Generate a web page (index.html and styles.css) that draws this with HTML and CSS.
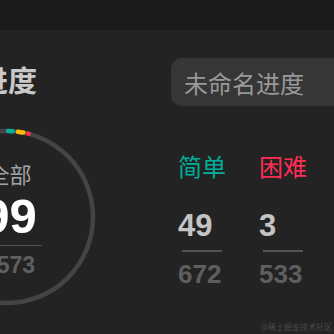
FILE: index.html
```html
<!DOCTYPE html>
<html lang="zh-CN">
<head>
    <meta charset="UTF-8">
    <meta name="viewport" content="width=device-width, initial-scale=1.0">
    <title>进度</title>
    <link rel="stylesheet" href="styles.css">
</head>
<body>
    <div class="topbar"></div>

    <div class="board">
        <section class="overview">
            <h2 class="title">进度</h2>
            <div class="ring-wrap">
                <svg class="ring" width="180" height="180" viewBox="0 0 180 180">
                    <circle class="ring-track" cx="90" cy="90" r="86"></circle>
                    <!-- segments start at 12 o'clock, later ones drawn on top -->
                    <circle class="ring-seg seg-easy" cx="90" cy="90" r="86" stroke-dasharray="5 600" stroke-dashoffset="-1"></circle>
                    <circle class="ring-seg seg-medium" cx="90" cy="90" r="86" stroke-dasharray="5.5 600" stroke-dashoffset="-11"></circle>
                    <circle class="ring-seg seg-hard" cx="90" cy="90" r="86" stroke-dasharray="0.5 600" stroke-dashoffset="-21.5"></circle>
                </svg>
                <div class="ring-text">
                    <div class="ring-label">全部</div>
                    <div class="ring-done">99</div>
                    <div class="ring-line"></div>
                    <div class="ring-total">1573</div>
                </div>
            </div>
        </section>

        <section class="detail">
            <input class="name-box" type="text" placeholder="未命名进度">
            <div class="stats">
                <div class="stat easy">
                    <div class="stat-label">简单</div>
                    <div class="stat-done">49</div>
                    <div class="stat-line"></div>
                    <div class="stat-total">672</div>
                </div>
                <div class="stat hard">
                    <div class="stat-label">困难</div>
                    <div class="stat-done">3</div>
                    <div class="stat-line"></div>
                    <div class="stat-total">533</div>
                </div>
            </div>
        </section>
    </div>

    <div class="watermark">@稀土掘金技术社区</div>
</body>
</html>
```

FILE: styles.css
```css
html, body {
    margin: 0;
    padding: 0;
    height: 100%;
    overflow: hidden;
    background-color: #232323;
    font-family: "Noto Sans CJK SC", sans-serif;
}

.topbar {
    height: 30px;
    background-color: #1b1b1b;
}

.board {
    display: flex;
    margin-left: -95px;
}

.overview {
    width: 205px;
    flex-shrink: 0;
}

.title {
    margin: 31px 0 0 0;
    padding-left: 74px;
    font-size: 29px;
    line-height: 36px;
    font-weight: 700;
    color: #c9c9c9;
}

.ring-wrap {
    position: relative;
    width: 180px;
    height: 180px;
    margin: 30px 0 0 12px;
}

.ring {
    display: block;
    transform: rotate(-90deg);
}

.ring-track,
.ring-seg {
    fill: none;
    stroke-width: 4.5;
}

.ring-track {
    stroke: #444444;
}

.ring-seg {
    stroke-linecap: round;
}

.seg-easy {
    stroke: #00af9b;
}

.seg-medium {
    stroke: #ffb800;
}

.seg-hard {
    stroke: #ff2d55;
}

.ring-text {
    position: absolute;
    top: 0;
    left: 0;
    right: 0;
    bottom: 0;
    display: flex;
    flex-direction: column;
    align-items: center;
    padding: 32px 0 0 5px;
}

.ring-label {
    font-size: 22px;
    line-height: 1.3;
    color: #a3a3a3;
}

.ring-done {
    margin-top: 4px;
    font-family: "Liberation Sans", sans-serif;
    font-size: 49px;
    line-height: 1;
    font-weight: 700;
    color: #ffffff;
}

.ring-line {
    width: 64px;
    height: 1.5px;
    margin-top: 4px;
    background-color: #555555;
}

.ring-total {
    margin-top: 8px;
    font-family: "Liberation Sans", sans-serif;
    font-size: 23px;
    line-height: 1;
    font-weight: 700;
    color: #5f5f5f;
}

.detail {
    margin-left: 61px;
    padding-top: 28px;
}

.name-box {
    display: block;
    box-sizing: border-box;
    width: 220px;
    height: 48px;
    padding: 0 13px;
    border: none;
    border-radius: 10px;
    background-color: #363636;
    font-family: "Noto Sans CJK SC", sans-serif;
    font-size: 24px;
    color: #dddddd;
    outline: none;
}

.name-box::placeholder {
    color: #999999;
}

.stats {
    display: flex;
    gap: 33px;
    margin-top: 44px;
    padding-left: 7px;
}

.stat {
    width: 48px;
}

.stat-label {
    font-size: 24px;
    line-height: 1.3;
    white-space: nowrap;
}

.easy .stat-label {
    color: #00af9b;
}

.hard .stat-label {
    color: #ff2d55;
}

.stat-done {
    margin-top: 27px;
    font-family: "Liberation Sans", sans-serif;
    font-size: 31px;
    font-weight: 700;
    color: #c4c4c4;
}

.stat-line {
    width: 40px;
    height: 1.5px;
    margin: 6px 0 0 4px;
    background-color: #555555;
}

.stat-total {
    margin-top: 7px;
    font-family: "Liberation Sans", sans-serif;
    font-size: 26px;
    font-weight: 700;
    color: #5e5e5e;
}

.watermark {
    position: absolute;
    right: 2px;
    bottom: 2px;
    font-size: 8px;
    color: #4a4a4a;
}
```
